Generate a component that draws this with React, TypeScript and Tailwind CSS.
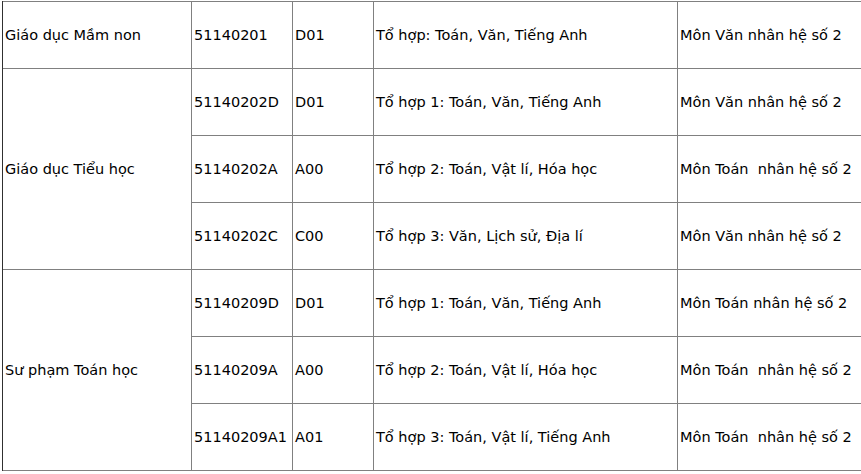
const nganh = [
  {
    ten: "Giáo dục Mầm non",
    dong: [["51140201", "D01", "Tổ hợp: Toán, Văn, Tiếng Anh", "Môn Văn nhân hệ số 2"]],
  },
  {
    ten: "Giáo dục Tiểu học",
    dong: [
      ["51140202D", "D01", "Tổ hợp 1: Toán, Văn, Tiếng Anh", "Môn Văn nhân hệ số 2"],
      ["51140202A", "A00", "Tổ hợp 2: Toán, Vật lí, Hóa học", "Môn Toán  nhân hệ số 2"],
      ["51140202C", "C00", "Tổ hợp 3: Văn, Lịch sử, Địa lí", "Môn Văn nhân hệ số 2"],
    ],
  },
  {
    ten: "Sư phạm Toán học",
    dong: [
      ["51140209D", "D01", "Tổ hợp 1: Toán, Văn, Tiếng Anh", "Môn Toán nhân hệ số 2"],
      ["51140209A", "A00", "Tổ hợp 2: Toán, Vật lí, Hóa học", "Môn Toán  nhân hệ số 2"],
      ["51140209A1", "A01", "Tổ hợp 3: Toán, Vật lí, Tiếng Anh", "Môn Toán  nhân hệ số 2"],
    ],
  },
];

const rowSpan: Record<number, string> = { 1: "row-span-1", 3: "row-span-3" };

function O({ children, className = "" }: { children: React.ReactNode; className?: string }) {
  return (
    <div className={`bg-white flex items-center pl-[2px] whitespace-pre text-black ${className}`}>
      {children}
    </div>
  );
}

export default function App() {
  return (
    <div className="w-[861px] h-[474px] overflow-hidden bg-white pt-[1px] pl-[2px]">
      <div
        className="w-[1000px] grid grid-cols-[188px_100px_80px_303px_320px] auto-rows-[66px] gap-[1px] bg-[#808080] border-l border-[#303030] py-[1px] text-[14.5px] leading-none"
        style={{ fontFamily: '"DejaVu Sans", Verdana, sans-serif' }}
      >
        {nganh.map((n) =>
          [
            <O key={n.ten} className={rowSpan[n.dong.length]}>
              {n.ten}
            </O>,
            ...n.dong.map((d, i) =>
              d.map((c, j) => (
                <O key={`${n.ten}-${i}-${j}`} className={j === 0 ? "col-start-2" : ""}>
                  {c}
                </O>
              ))
            ),
          ]
        )}
      </div>
    </div>
  );
}
